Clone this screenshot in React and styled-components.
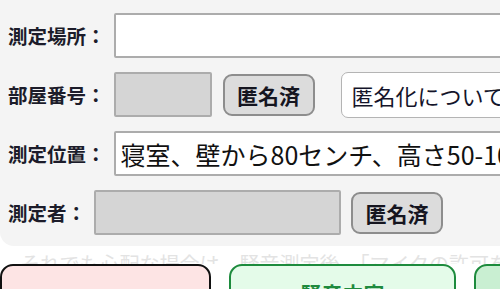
import React from 'react';
import styled, { createGlobalStyle } from 'styled-components';

const GlobalStyle = createGlobalStyle`
  html, body {
    margin: 0;
    padding: 0;
    background: #ffffff;
    overflow: hidden;
  }
  body {
    font-family: "Noto Sans CJK JP", "Noto Sans", sans-serif;
    color: #1b1b24;
  }
`;

const Page = styled.div`
  width: 640px;
`;

const Panel = styled.section`
  background: #f4f4f4;
  border-radius: 0 0 14px 14px;
  padding: 13px 0 11px 8px;
  display: flex;
  flex-direction: column;
  gap: 14px;
`;

const Row = styled.div`
  display: flex;
  align-items: center;
  gap: 8px;
  height: 45px;
`;

const Label = styled.span`
  font-size: 19.5px;
  font-weight: 700;
  white-space: nowrap;
  color: #1c1c2a;
`;

const TextField = styled.input`
  box-sizing: border-box;
  height: 45px;
  width: ${(p) => (p.$width ? `${p.$width}px` : 'auto')};
  flex: ${(p) => (p.$width ? '0 0 auto' : '1')};
  background: ${(p) => (p.$masked ? '#d5d5d5' : '#ffffff')};
  border: 2px solid #acacac;
  border-radius: 2px;
  padding: 0 5px;
  font-family: inherit;
  font-size: 25px;
  color: #111;
  outline: none;
`;

const MaskButton = styled.button`
  box-sizing: border-box;
  height: 42px;
  width: 92px;
  margin-left: ${(p) => p.$offset || 0}px;
  background: #dcdcdc;
  border: 2px solid #8d8d8d;
  border-radius: 9px;
  font-family: inherit;
  font-size: 21px;
  font-weight: 700;
  color: #15151f;
  padding: 0;
`;

const InfoBox = styled.div`
  box-sizing: border-box;
  height: 46px;
  margin-left: 18px;
  flex: 1;
  display: flex;
  align-items: center;
  padding-left: 10px;
  background: #ffffff;
  border: 1px solid #b4b4b4;
  border-radius: 7px;
  font-size: 22px;
  white-space: nowrap;
  overflow: hidden;
  color: #14142a;
`;

const Note = styled.p`
  margin: 0;
  height: 18px;
  overflow: hidden;
  padding-left: 20px;
  font-size: 20px;
  line-height: 36px;
  white-space: nowrap;
  color: #e3e3e3;
`;

const Actions = styled.div`
  display: flex;
  gap: 18px;
`;

const ActionButton = styled.button`
  box-sizing: border-box;
  flex: 0 0 auto;
  width: ${(p) => p.$width}px;
  height: 70px;
  padding: 12px 0 0;
  display: flex;
  justify-content: center;
  align-items: flex-start;
  background: ${(p) => p.$bg};
  border: 2px solid ${(p) => p.$border};
  border-radius: 13px;
  font-family: inherit;
  font-size: 21px;
  font-weight: 700;
  color: ${(p) => p.$color || '#111'};
`;

export default function App() {
  return (
    <Page>
      <GlobalStyle />
      <Panel>
        <Row>
          <Label>測定場所：</Label>
          <TextField readOnly defaultValue="" />
        </Row>
        <Row>
          <Label>部屋番号：</Label>
          <TextField readOnly $masked $width={98} defaultValue="" />
          <MaskButton $offset={3}>匿名済</MaskButton>
          <InfoBox>匿名化については、こちらをご覧ください</InfoBox>
        </Row>
        <Row>
          <Label>測定位置：</Label>
          <TextField readOnly defaultValue="寝室、壁から80センチ、高さ50-100センチ" />
        </Row>
        <Row>
          <Label>測定者：</Label>
          <TextField readOnly $masked $width={247} defaultValue="" />
          <MaskButton $offset={2}>匿名済</MaskButton>
        </Row>
      </Panel>
      <Note>それでも心配な場合は、騒音測定後、「マイクの許可を取り消す」を押してください</Note>
      <Actions>
        <ActionButton $width={211} $bg="#fde4e4" $border="#111111" />
        <ActionButton $width={227} $bg="#e4fbe9" $border="#1d8b3d" $color="#1f8a3e">
          騒音内容
        </ActionButton>
        <ActionButton $width={160} $bg="#c9efd2" $border="#1d8b3d" $color="#1f8a3e" />
      </Actions>
    </Page>
  );
}
